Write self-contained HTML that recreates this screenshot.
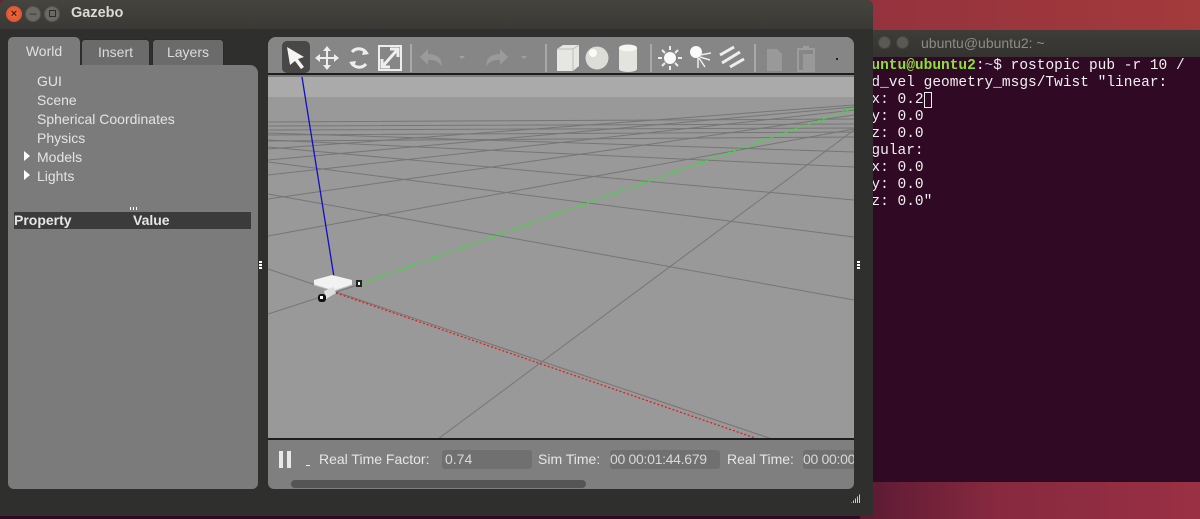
<!DOCTYPE html>
<html><head><meta charset="utf-8"><style>
*{margin:0;padding:0;box-sizing:border-box}
body{width:1200px;height:519px;overflow:hidden;position:relative;background:#2d0a22;font-family:"Liberation Sans","DejaVu Sans",sans-serif}
.abs{position:absolute}
</style></head><body>
<div class="abs" style="left:0;top:0;width:1200px;height:40px;background:linear-gradient(90deg,#6a2436,#8e2f3e 60%,#a33a3c)"></div>
<div class="abs" style="left:860px;top:480px;width:340px;height:39px;background:linear-gradient(90deg,#5a1a33,#87293f 40%,#9a3044)"></div>
<div class="abs" style="left:860px;top:30px;width:340px;height:27px;background:linear-gradient(#3e3d39,#34332f)"></div>
<div class="abs" style="left:878px;top:36px;width:13px;height:13px;border-radius:50%;background:#5a5954;border:1px solid #46453f"></div>
<div class="abs" style="left:896px;top:36px;width:13px;height:13px;border-radius:50%;background:#5a5954;border:1px solid #46453f"></div>
<div class="abs" style="left:921px;top:35px;color:#8e8c85;font-size:14px">ubuntu@ubuntu2: ~</div>
<div class="abs" style="left:860px;top:57px;width:340px;height:425px;background:#300a24;overflow:hidden">
<pre style="position:absolute;left:-6px;top:1px;font-family:'Liberation Mono',monospace;font-size:14.5px;line-height:17px;color:#f0f0f0">
<span style="color:#8ae234;font-weight:bold">ubuntu@ubuntu2</span>:<span style="color:#c0c8e0">~</span>$ rostopic pub -r 10 /
cmd_vel geometry_msgs/Twist "linear:
  x: 0.2<span style="outline:1px solid #eee;outline-offset:-1px">&nbsp;</span>
  y: 0.0
  z: 0.0
angular:
  x: 0.0
  y: 0.0
  z: 0.0"</pre></div>
<div class="abs" style="left:0;top:0;width:873px;height:516px;background:#2f2f2e;border-radius:6px 6px 0 0"></div>
<div class="abs" style="left:0;top:0;width:873px;height:29px;background:linear-gradient(#45443f,#3a3935);border-radius:6px 6px 0 0"></div>
<div class="abs" style="left:6px;top:6px;width:16px;height:16px;border-radius:50%;background:radial-gradient(#f0703e,#d8492a);color:#4a1a10;font-size:11px;line-height:16px;text-align:center;font-weight:bold">×</div>
<div class="abs" style="left:25px;top:6px;width:16px;height:16px;border-radius:50%;background:#6a6964;border:1px solid #55544f;color:#2e2e2c;font-size:12px;line-height:12px;text-align:center">–</div>
<div class="abs" style="left:44px;top:6px;width:16px;height:16px;border-radius:50%;background:#6a6964;border:1px solid #55544f"></div>
<div class="abs" style="left:49px;top:10px;width:7px;height:7px;border:1px solid #2e2e2c"></div>
<div class="abs" style="left:71px;top:5px;color:#dcdad5;font-size:14.5px;font-weight:bold">Gazebo</div>
<div class="abs" style="left:81px;top:39px;width:69px;height:27px;background:#6b6b6b;border:1px solid #2a2a2a;border-radius:4px 4px 0 0;color:#dcdcdc;font-size:14px;text-align:center;line-height:25px">Insert</div>
<div class="abs" style="left:152px;top:39px;width:72px;height:27px;background:#6b6b6b;border:1px solid #2a2a2a;border-radius:4px 4px 0 0;color:#dcdcdc;font-size:14px;text-align:center;line-height:25px">Layers</div>
<div class="abs" style="left:8px;top:65px;width:250px;height:424px;background:#7b7b7b;border-radius:0 8px 6px 6px"></div>
<div class="abs" style="left:8px;top:37px;width:72px;height:30px;background:#7b7b7b;border-radius:5px 5px 0 0;color:#e0e0e0;font-size:14px;text-align:center;line-height:28px">World</div>
<div class="abs" style="left:37px;top:72px;color:#e4e4e4;font-size:14px;line-height:19px">GUI<br>Scene<br>Spherical Coordinates<br>Physics<br>Models<br>Lights</div>
<div class="abs" style="left:24px;top:151px;width:0;height:0;border-left:6px solid #fff;border-top:5px solid transparent;border-bottom:5px solid transparent"></div>
<div class="abs" style="left:24px;top:170px;width:0;height:0;border-left:6px solid #fff;border-top:5px solid transparent;border-bottom:5px solid transparent"></div>
<div class="abs" style="left:130px;top:207px;width:7px;height:3px;border-left:1px solid #fff;border-right:1px solid #fff"><div style="margin-left:2px;width:1px;height:3px;background:#fff"></div></div>
<div class="abs" style="left:14px;top:212px;width:237px;height:17px;background:#3b3b3b;color:#e6e6e6;font-size:14px;font-weight:bold;line-height:17px"><span style="position:absolute;left:0">Property</span><span style="position:absolute;left:119px">Value</span></div>
<div class="abs" style="left:259px;top:261px;width:3px;height:8px;background:repeating-linear-gradient(#fff 0 2px,transparent 2px 3px)"></div>
<div class="abs" style="left:857px;top:261px;width:3px;height:8px;background:repeating-linear-gradient(#fff 0 2px,transparent 2px 3px)"></div>
<div class="abs" style="left:268px;top:37px;width:586px;height:452px;background:#7f7f7f;border-radius:8px 8px 6px 6px;overflow:hidden">
 <div class="abs" style="left:0;top:0;width:586px;height:38px;background:#868686;border-bottom:2px solid #1e1e1e"></div>
 <svg class="abs" style="left:0;top:0" width="586" height="38">
  <rect x="14" y="4" width="28" height="32" rx="5" fill="#4a4846"/>
  <path d="M19 10 L36 20 L30 22 L36 30 L33 32 L27 24 L22 28 Z" fill="#f4f4f4"/>
  <g fill="#eee"><path d="M59 9 L63 14 L60 14 L60 20 L66 20 L66 17 L71 21 L66 25 L66 22 L60 22 L60 28 L63 28 L59 33 L55 28 L58 28 L58 22 L52 22 L52 25 L47 21 L52 17 L52 20 L58 20 L58 14 L55 14 Z"/></g>
  <path d="M84 15 A9 9 0 0 1 99 17 M98 27 A9 9 0 0 1 83 25" stroke="#eee" stroke-width="3" fill="none"/>
  <path d="M96 12 L101 17 L94 18Z M86 30 L81 25 L88 24Z" fill="#eee"/>
  <rect x="111" y="9" width="22" height="24" fill="none" stroke="#eee" stroke-width="2"/>
  <path d="M114 30 L130 12 M122 12 L130 12 L130 20 M114 22 L114 30 L122 30" stroke="#eee" stroke-width="3" fill="none"/>
  <rect x="142" y="7" width="2" height="28" fill="#a8a8a8"/>
  <path d="M160 12 L152 20 L160 28 L160 23 Q170 22 174 30 Q174 17 160 17 Z" fill="#9a9a9a"/>
  <path d="M191 19 L197 19 L194 22Z M253 19 L259 19 L256 22Z" fill="#a0a0a0"/>
  <path d="M232 12 L240 20 L232 28 L232 23 Q222 22 218 30 Q218 17 232 17 Z" fill="#9a9a9a"/>
  <rect x="277" y="7" width="2" height="28" fill="#a8a8a8"/>
  <path d="M289 12 L295 8 L311 8 L311 29 L305 34 L289 34Z" fill="#e6e6e2"/><path d="M289 12 L305 12 L305 34 M305 12 L311 8" stroke="#bdbdb8" fill="none"/>
  <circle cx="329" cy="21" r="11.5" fill="#ddddd8"/><circle cx="325" cy="16" r="4" fill="#fafaf8"/>
  <rect x="351" y="11" width="18" height="21" fill="#e4e4df"/><ellipse cx="360" cy="11" rx="9" ry="3.5" fill="#f6f6f2"/><ellipse cx="360" cy="32" rx="9" ry="3" fill="#e4e4df"/>
  <rect x="382" y="7" width="2" height="28" fill="#a8a8a8"/>
  <circle cx="402" cy="21" r="6" fill="#fafafa"/>
  <g stroke="#eee" stroke-width="2"><path d="M402 9v4M402 29v4M390 21h4M410 21h4M394 13l3 3M407 26l3 3M410 13l-3 3M394 29l3-3"/></g>
  <circle cx="428" cy="15" r="6" fill="#fafafa"/>
  <g stroke="#eee" stroke-width="1.5"><path d="M432 18 L443 16 M432 20 L442 23 M431 21 L437 30 M430 21 L430 31"/></g>
  <g stroke="#eee" stroke-width="3"><path d="M452 18 L466 10 M454 26 L472 15 M462 30 L476 22"/></g>
  <rect x="486" y="7" width="2" height="28" fill="#a8a8a8"/>
  <path d="M499 12 L509 12 L514 17 L514 34 L499 34Z" fill="#999"/>
  <rect x="530" y="12" width="16" height="22" fill="none" stroke="#9c9c9c" stroke-width="2"/><rect x="535" y="9" width="6" height="4" fill="#9c9c9c"/><rect x="535" y="17" width="12" height="17" fill="#999"/>
  <rect x="568" y="21" width="2" height="2" fill="#222"/>
 </svg>
 <svg class="abs" style="left:0;top:40px" width="586" height="362" viewBox="0 0 586 362">
  <rect width="586" height="362" fill="#999999"/>
  <rect width="586" height="20" fill="#aaaaaa"/>
  <g stroke="#767676" stroke-width="1" fill="none">
   <path d="M0 45 L586 42 M0 49 L586 47 M0 53 L586 51 M0 58 L586 55 M0 64 L586 60"/>
   <path d="M0 192 L504 362 M0 117 L586 223 M0 85 L586 160 M0 70 L586 123 M0 63 L586 90 M0 56 L586 75"/>
   <path d="M0 237 L93 207 M0 159 L586 52 M0 122 L586 38 M0 98 L586 33 M0 83 L586 30 M0 72 L586 28"/>
   <path d="M170 362 L586 53"/>
  </g>
  <path d="M34 0 L66 200" stroke="#1010c0" stroke-width="1.3"/>
  <path d="M93 207 L586 31" stroke="#22ee22" stroke-width="1.2" stroke-dasharray="3 2"/>
  <path d="M68 216 L490 362" stroke="#ee1111" stroke-width="1.2" stroke-dasharray="2 2"/>
  <path d="M46 203 L64 198 L84 203 L84 208 L66 214 L46 208Z" fill="#f2f2f2"/>
  <path d="M46 208 L66 214 L84 208" stroke="#bbb" fill="none"/>
  <path d="M56 214 L66 210 L68 216 L58 222Z" fill="#ddd"/>
  <rect x="50" y="217" width="8" height="8" rx="3" fill="#111"/><rect x="52" y="219" width="3" height="3" fill="#fff"/>
  <rect x="88" y="203" width="6" height="7" fill="#222"/><rect x="90" y="205" width="2" height="3" fill="#fff"/>
 </svg>
 <div class="abs" style="left:0;top:401px;width:586px;height:2px;background:#1e1e1e"></div>
 <div class="abs" style="left:11px;top:414px;width:4px;height:17px;background:#e8e8e8"></div>
 <div class="abs" style="left:19px;top:414px;width:4px;height:17px;background:#e8e8e8"></div>
 <div class="abs" style="left:38px;top:428px;width:4px;height:1px;background:#eee"></div>
 <div class="abs" style="left:51px;top:414px;color:#e6e6e6;font-size:14px;white-space:nowrap">Real Time Factor:</div>
 <div class="abs" style="left:174px;top:413px;width:90px;height:19px;background:#707070;border-radius:3px;color:#d8d8d8;font-size:14px;line-height:19px;padding-left:3px">0.74</div>
 <div class="abs" style="left:270px;top:414px;color:#e6e6e6;font-size:14px">Sim Time:</div>
 <div class="abs" style="left:342px;top:413px;width:110px;height:19px;background:#707070;border-radius:3px;color:#d8d8d8;font-size:14px;line-height:19px;white-space:nowrap;letter-spacing:-0.3px">00 00:01:44.679</div>
 <div class="abs" style="left:459px;top:414px;color:#e6e6e6;font-size:14px">Real Time:</div>
 <div class="abs" style="left:535px;top:413px;width:60px;height:19px;background:#707070;border-radius:3px;color:#d8d8d8;font-size:14px;line-height:19px;white-space:nowrap;overflow:hidden;letter-spacing:-0.3px">00 00:00</div>
 <div class="abs" style="left:23px;top:443px;width:295px;height:8px;background:#555;border-radius:4px"></div>
</div>
<div class="abs" style="left:851px;top:494px;width:9px;height:9px;background:repeating-linear-gradient(90deg,#ccc 0 1px,transparent 1px 2px);clip-path:polygon(100% 0,100% 100%,0 100%)"></div>
</body></html>
